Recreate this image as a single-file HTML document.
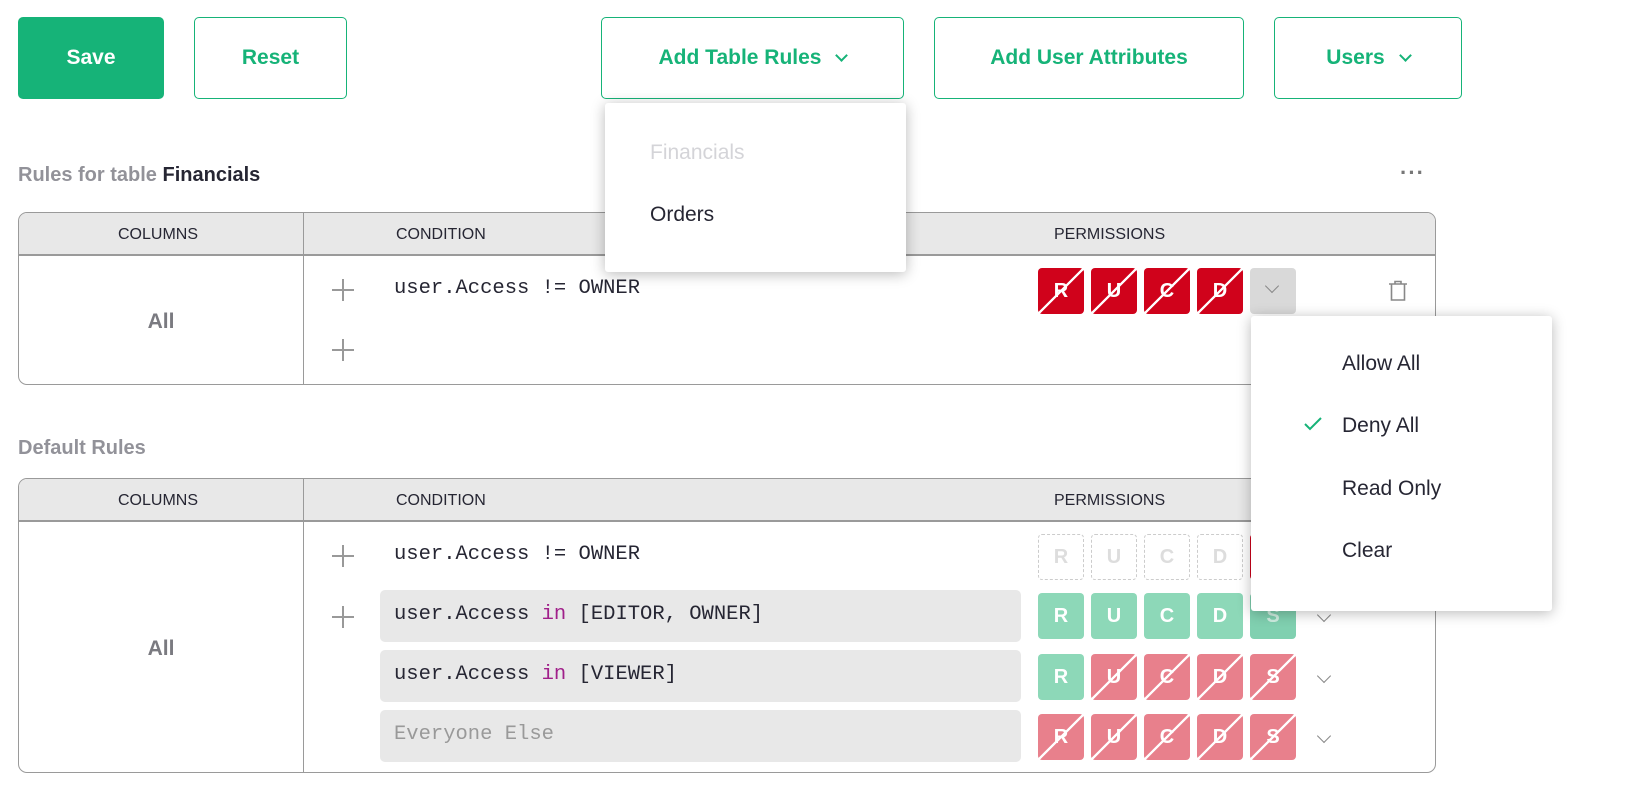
<!DOCTYPE html>
<html><head><meta charset="utf-8"><style>
*{box-sizing:border-box;margin:0;padding:0}
body{width:1629px;height:807px;background:#fff;position:relative;overflow:hidden;font-family:"Liberation Sans",sans-serif;color:#262633}
.a{position:absolute}
.btn{position:absolute;top:17px;height:82px;border:1px solid #16b378;border-radius:5px;color:#16b378;font-weight:bold;font-size:21px;display:flex;align-items:center;justify-content:center;background:#fff}
.chev{display:inline-block;width:9px;height:9px;border-right:2px solid currentColor;border-bottom:2px solid currentColor;transform:rotate(45deg);margin-left:16px;margin-top:-6px}
.h{font-size:20px;font-weight:bold;color:#929299}
.tbl{position:absolute;left:18px;width:1418px;border:1px solid #9a9a9a;border-radius:9px;overflow:hidden}
.hd{position:absolute;left:0;top:0;width:100%;height:43px;background:#e8e8e8;border-bottom:2px solid #9a9a9a}
.hd span{position:absolute;top:13px;font-size:16px;color:#262633}
.vl{position:absolute;left:284px;top:0;bottom:0;border-left:1px solid #9a9a9a}
.all{position:absolute;left:0;width:284px;text-align:center;font-size:21px;font-weight:bold;color:#7a7a80}
.mono{font-family:"Liberation Mono",monospace;font-size:20.5px;color:#262633}
.plus{position:absolute;width:22px;height:22px}
.plus:before{content:"";position:absolute;left:10px;top:0;width:1.5px;height:22px;background:#999}
.plus:after{content:"";position:absolute;top:10px;left:0;height:1.5px;width:22px;background:#999}
.p{position:absolute;width:46px;height:46px;border-radius:4px;color:#fff;font-weight:bold;font-size:20px;display:flex;align-items:center;justify-content:center}
.x{background-image:linear-gradient(to bottom right,transparent calc(50% - 1.3px),#fff calc(50% - 1px),#fff calc(50% + 1px),transparent calc(50% + 1.3px))}
.r{background-color:#d0021b}.lr{background-color:#e8808c}.g{background-color:#8dd8b8}
.d{border:1.5px dashed #ccc;color:#ddd;background:#fff}
.cv{position:absolute;width:10px;height:10px;border-right:1.5px solid #888;border-bottom:1.5px solid #888;transform:rotate(45deg)}
.cond{position:absolute;left:380px;width:641px;height:52px;background:#e8e8e8;border-radius:5px;padding:13px 0 0 14px}
.menu{position:absolute;background:#fff;border-radius:3px;box-shadow:0 2px 14px rgba(0,0,0,.28);font-size:21px;color:#262633}
.menu div{position:absolute}
</style></head><body>
<div class="btn" style="left:18px;width:146px;background:#16b378;color:#fff">Save</div>
<div class="btn" style="left:194px;width:153px">Reset</div>
<div class="btn" style="left:601px;width:303px">Add Table Rules<span class="chev"></span></div>
<div class="btn" style="left:934px;width:310px">Add User Attributes</div>
<div class="btn" style="left:1274px;width:188px">Users<span class="chev"></span></div>

<div class="a h" style="left:18px;top:164px">Rules for table <span style="color:#262633">Financials</span></div>
<div class="a" style="left:1400px;top:160px;font-size:22px;color:#777;font-weight:bold;letter-spacing:1px">···</div>

<div class="tbl" style="top:212px;height:173px">
 <div class="hd"><span style="left:99px">COLUMNS</span><span style="left:377px">CONDITION</span><span style="left:1035px">PERMISSIONS</span></div>
 <div class="vl"></div>
 <div class="all" style="top:97px">All</div>
 <div class="plus" style="left:313px;top:66px"></div>
 <div class="plus" style="left:313px;top:126px"></div>
 <div class="a mono" style="left:375px;top:64px">user.Access != OWNER</div>
 <div class="p r x" style="left:1019px;top:55px">R</div>
 <div class="p r x" style="left:1072px;top:55px">U</div>
 <div class="p r x" style="left:1125px;top:55px">C</div>
 <div class="p r x" style="left:1178px;top:55px">D</div>
 <div class="p" style="left:1231px;top:55px;background:#d9d9d9"><span class="cv" style="left:17px;top:13px"></span></div>
 <svg class="a" style="left:1367px;top:66px" width="24" height="24" viewBox="0 0 24 24" fill="none" stroke="#888" stroke-width="1.6"><path d="M3 5h18M9 5V2.5h6V5M5.5 5v16h13V5"/></svg>
</div>

<div class="a h" style="left:18px;top:437px">Default Rules</div>
<div class="tbl" style="top:478px;height:295px">
 <div class="hd"><span style="left:99px">COLUMNS</span><span style="left:377px">CONDITION</span><span style="left:1035px">PERMISSIONS</span></div>
 <div class="vl"></div>
 <div class="all" style="top:158px">All</div>
 <div class="plus" style="left:313px;top:66px"></div>
 <div class="plus" style="left:313px;top:127px"></div>
 <div class="a mono" style="left:375px;top:64px">user.Access != OWNER</div>
 <div class="cond mono" style="left:361px;top:111px">user.Access <span style="color:#a0208a">in</span> [EDITOR, OWNER]</div>
 <div class="cond mono" style="left:361px;top:171px">user.Access <span style="color:#a0208a">in</span> [VIEWER]</div>
 <div class="cond mono" style="left:361px;top:231px;color:#999">Everyone Else</div>
 <div class="p d" style="left:1019px;top:55px">R</div>
 <div class="p d" style="left:1072px;top:55px">U</div>
 <div class="p d" style="left:1125px;top:55px">C</div>
 <div class="p d" style="left:1178px;top:55px">D</div>
 <div class="p r" style="left:1231px;top:55px"></div>
 <div class="p g" style="left:1019px;top:114px">R</div>
 <div class="p g" style="left:1072px;top:114px">U</div>
 <div class="p g" style="left:1125px;top:114px">C</div>
 <div class="p g" style="left:1178px;top:114px">D</div>
 <div class="p g" style="left:1231px;top:114px;background:#80d0b0;color:#cfeee0">S</div>
 <div class="p g" style="left:1019px;top:175px">R</div>
 <div class="p lr x" style="left:1072px;top:175px">U</div>
 <div class="p lr x" style="left:1125px;top:175px">C</div>
 <div class="p lr x" style="left:1178px;top:175px">D</div>
 <div class="p lr x" style="left:1231px;top:175px">S</div>
 <div class="p lr x" style="left:1019px;top:235px">R</div>
 <div class="p lr x" style="left:1072px;top:235px">U</div>
 <div class="p lr x" style="left:1125px;top:235px">C</div>
 <div class="p lr x" style="left:1178px;top:235px">D</div>
 <div class="p lr x" style="left:1231px;top:235px">S</div>
 <span class="cv" style="left:1300px;top:131px"></span>
 <span class="cv" style="left:1300px;top:192px"></span>
 <span class="cv" style="left:1300px;top:252px"></span>
</div>

<div class="menu" style="left:605px;top:103px;width:301px;height:169px">
 <div style="left:45px;top:38px;color:#d4d4d8">Financials</div>
 <div style="left:45px;top:100px">Orders</div>
</div>
<div class="menu" style="left:1251px;top:316px;width:301px;height:295px">
 <div style="left:91px;top:36px">Allow All</div>
 <svg style="position:absolute;left:52px;top:100px" width="20" height="16" viewBox="0 0 20 16" fill="none" stroke="#16b378" stroke-width="2"><path d="M2 8l5 5L18 2"/></svg>
 <div style="left:91px;top:98px">Deny All</div>
 <div style="left:91px;top:161px">Read Only</div>
 <div style="left:91px;top:223px">Clear</div>
</div>
</body></html>
